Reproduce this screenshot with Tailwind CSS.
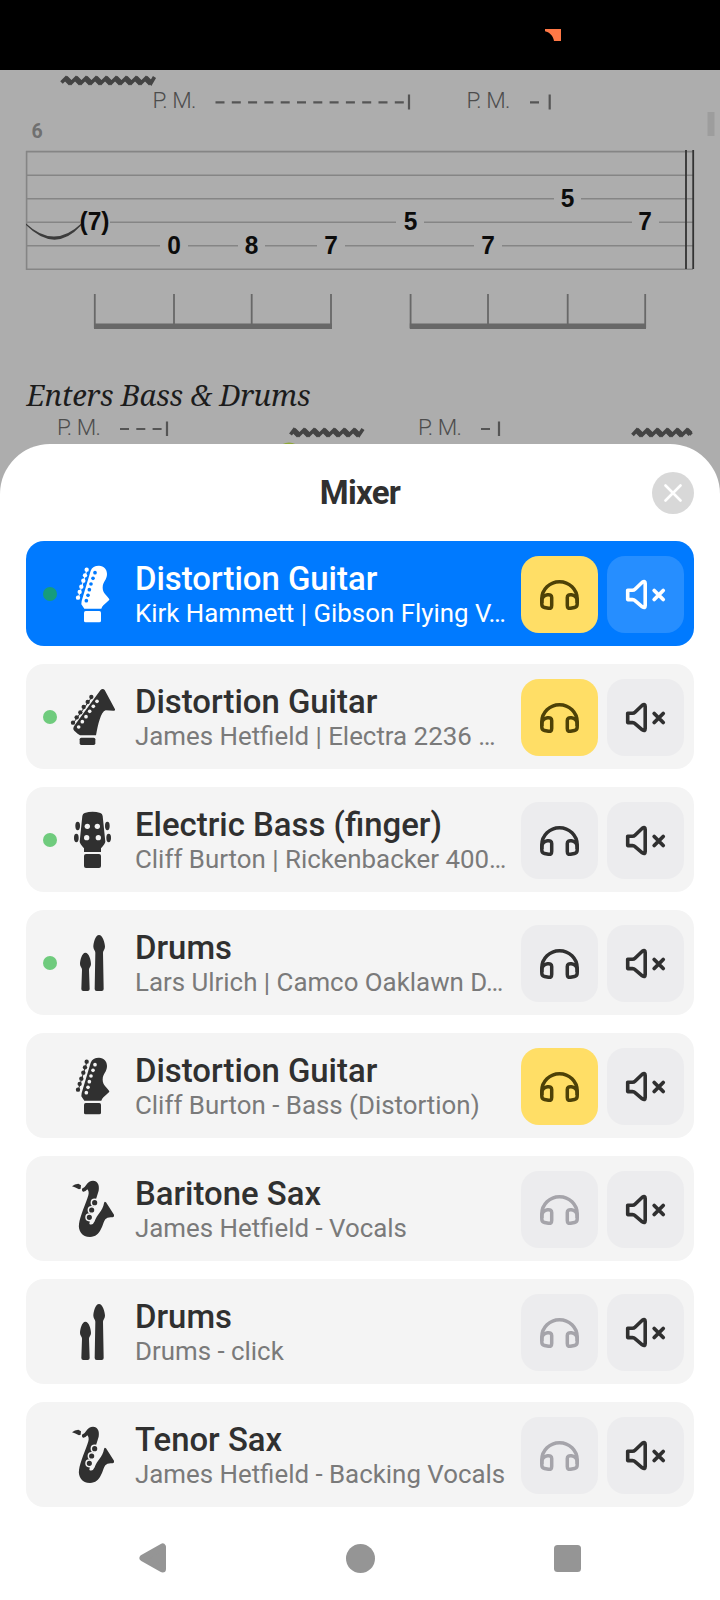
<!DOCTYPE html>
<html lang="en">
<head>
<meta charset="utf-8">
<title>Mixer</title>
<script src="https://cdn.jsdelivr.net/npm/@tailwindcss/browser@4"></script>
</head>
<body class="w-[720px] h-[1600px] overflow-hidden bg-[#adadad] font-[Roboto,sans-serif] text-[#303030]">
<svg class="hidden">
  <symbol id="guitar" viewBox="0 0 150 174">
    <path fill="currentColor" d="M93 2C108 2 117 13 117 27C117 45 104 50 104 68C104 85 118 92 124 103C125 108 104 118 100 131H49L40 118L41 108L68 17C72 7 80 2 93 2Z"/>
    <rect fill="currentColor" x="48" y="138" width="51" height="34" rx="5"/>
    <g fill="currentColor"><circle cx="56" cy="14" r="6.5"/><circle cx="51" cy="31" r="6.5"/><circle cx="46" cy="47" r="6.5"/><circle cx="40" cy="65" r="6.5"/><circle cx="35" cy="81" r="6.5"/><circle cx="30" cy="98" r="6.5"/></g>
    <path stroke="currentColor" stroke-width="3" d="M57 14L31 98"/>
    <g fill="var(--hole)"><circle cx="81" cy="23" r="5.5"/><circle cx="75" cy="40" r="5.5"/><circle cx="69" cy="57" r="5.5"/><circle cx="64" cy="74" r="5.5"/><circle cx="60" cy="91" r="5.5"/><circle cx="55" cy="107" r="5.5"/></g>
  </symbol>
  <symbol id="pointed" viewBox="0 0 150 174">
    <path fill="currentColor" d="M97 7Q104 -1 110 6L141 64Q142 69 136 68L113 67C98 72 90 110 84 142H36Q20 132 16 124Q15 118 20 112Z"/>
    <rect fill="currentColor" x="35" y="149" width="47" height="22" rx="5"/>
    <g fill="currentColor"><circle cx="70" cy="27" r="6.5"/><circle cx="59" cy="42" r="6.5"/><circle cx="47" cy="57" r="6.5"/><circle cx="37" cy="73" r="6.5"/><circle cx="26" cy="88" r="6.5"/><circle cx="15" cy="104" r="6.5"/></g>
    <path stroke="currentColor" stroke-width="3" d="M71 28L16 105"/>
    <g fill="var(--hole)"><circle cx="87" cy="40" r="5.5"/><circle cx="76" cy="55" r="5.5"/><circle cx="65" cy="70" r="5.5"/><circle cx="54" cy="86" r="5.5"/><circle cx="43" cy="101" r="5.5"/><circle cx="32" cy="117" r="5.5"/></g>
  </symbol>
  <symbol id="bass" viewBox="0 0 150 174">
    <path fill="currentColor" d="M50 6Q74 -1 97 6Q103 8 104 15L112 92Q111 98 99 112V123H48V112Q36 98 35 92L43 15Q44 8 50 6Z"/>
    <rect fill="currentColor" x="48" y="129" width="51" height="42" rx="6"/>
    <g fill="currentColor"><ellipse cx="29" cy="45" rx="7" ry="12.5"/><ellipse cx="118" cy="45" rx="7" ry="12.5"/><ellipse cx="25" cy="81" rx="7" ry="12.5"/><ellipse cx="122" cy="81" rx="7" ry="12.5"/></g>
    <g fill="var(--hole)"><circle cx="58" cy="46" r="8"/><circle cx="88" cy="46" r="8"/><circle cx="56" cy="80" r="8"/><circle cx="91" cy="80" r="8"/></g>
  </symbol>
  <symbol id="drums" viewBox="0 0 150 174">
    <path fill="currentColor" d="M93 3C104 3 111 28 111 38C111 46 105 50 105 56L107 165Q107 171 101 171H86Q80 171 80 165L82 56C82 50 76 46 76 38C76 28 82 3 93 3Z"/>
    <path fill="currentColor" d="M52 56C63 56 69 78 69 90C69 98 63 101 63 107L65 165Q65 171 59 171H46Q40 171 40 165L42 107C42 101 36 98 36 90C36 78 42 56 52 56Z"/>
  </symbol>
  <symbol id="sax" viewBox="0 0 150 174">
    <path fill="currentColor" d="M12 19Q20 11 31 11L39 16L38 26L33 28Q22 22 12 19Z"/>
    <path fill="currentColor" d="M42 26Q51 22 55 14Q63 2 75 2C89 2 95 15 92 32L84 58L68 110L64 132Q74 138 80 124C86 104 104 94 108 70Q109 62 114 67Q126 86 138 104Q140 110 134 112Q118 110 112 118C102 132 100 171 66 171C42 171 30 152 33 132C36 108 54 70 61 46Q64 34 58 28Q52 36 45 35Q41 33 42 26Z"/>
    <g fill="currentColor" stroke="var(--hole)" stroke-width="4.5"><circle cx="80" cy="68" r="10"/><circle cx="71" cy="90" r="10"/><circle cx="64" cy="112" r="10"/></g>
  </symbol>
  <symbol id="solo" viewBox="0 0 77 77">
    <g fill="none" stroke="currentColor" stroke-width="3.5" stroke-linejoin="round">
      <path d="M20.8 47V43A17.7 17.3 0 0 1 56.2 43V47"/>
      <path d="M20.8 48V45C20.8 41 23 39.5 26.5 38.8Q30.7 38.2 30.7 41.5V49.5Q30.7 52.8 27.5 52.3L23.5 51.5Q20.8 51 20.8 48Z"/>
      <path d="M56.2 48V45C56.2 41 54 39.5 50.5 38.8Q46.3 38.2 46.3 41.5V49.5Q46.3 52.8 49.5 52.3L53.5 51.5Q56.2 51 56.2 48Z"/>
    </g>
  </symbol>
  <symbol id="mute" viewBox="0 0 77 77">
    <g fill="none" stroke="currentColor" stroke-width="3.6" stroke-linejoin="round" stroke-linecap="round">
      <path d="M20.7 34.2H25.5Q27 34.2 28 33.2L35.3 26.2Q38.2 24.2 38.2 27.6V49.6Q38.2 52.8 35.3 50.8L28 44.6Q27 43.6 25.5 43.6H20.7Z"/>
      <path d="M47.2 34.5L56.2 43.5M56.2 34.5L47.2 43.5" stroke-width="3.8"/>
    </g>
  </symbol>
</svg>

<div class="h-[70px] bg-black">
  <svg class="block" width="720" height="70"><path fill="#ff7846" d="M545 29H561V41H554C553.5 36 549 32 545 31.3Z"/></svg>
</div>

<svg class="block" width="720" height="374" viewBox="0 70 720 374">
  <g fill="none" stroke="#444" stroke-width="3.6">
    <path d="M61.5 82.5L66 78L71 83L76 78L81 83L86 78L91 83L96 78L101 83L106 78L111 83L116 78L121 83L126 78L131 83L136 78L141 83L146 78L151 83L154.500 77"/>
    <path stroke-width="5.500" d="M65.500 78L71 83.500M75.500 78L81 83.500M85.500 78L91 83.500M95.500 78L101 83.500M105.500 78L111 83.500M115.500 78L121 83.500M125.500 78L131 83.500M135.500 78L141 83.500M145.500 78L151 83.500"/>
    <path d="M290.500 434.500L294 430L299 435L304 430L309 435L314 430L319 435L324 430L329 435L334 430L339 435L344 430L349 435L354 430L359 435L363 429"/>
    <path stroke-width="5.500" d="M293.500 430L299 435.500M303.500 430L309 435.500M313.500 430L319 435.500M323.500 430L329 435.500M333.500 430L339 435.500M343.500 430L349 435.500M353.500 430L359 435.500"/>
    <path d="M632.500 435L637 430L642 435L647 430L652 435L657 430L662 435L667 430L672 435L677 430L682 435L687 430L691.500 434.500"/>
    <path stroke-width="5.500" d="M636.500 430L642 435.500M646.500 430L652 435.500M656.500 430L662 435.500M666.500 430L672 435.500M676.500 430L682 435.500M686.500 430L690.500 434"/>
  </g>
  <g font-family="Roboto" font-weight="300" font-size="22.500" fill="#4c4c4c">
    <text x="152.500" y="107.700" textLength="44">P. M.</text><text x="466.500" y="107.700" textLength="44">P. M.</text>
    <text x="57" y="434.700" textLength="44">P. M.</text><text x="418" y="434.700" textLength="44">P. M.</text>
  </g>
  <g stroke="#555" stroke-width="2.200">
    <path stroke-dasharray="9 7.300" d="M215.500 102.300H404"/><path d="M409 94.500V109.500M530 102.300H539M549.700 94.500V109.500"/>
    <path stroke-dasharray="9 7.300" d="M120 429H162"/><path d="M167 421.500V436M481 429H490M499 421.500V436"/>
  </g>
  <text x="31.500" y="137.700" font-family="Roboto" font-weight="700" font-size="19.500" fill="#707070">6</text>
  <rect x="707.500" y="112" width="7" height="24" fill="#9d9d9d"/>
  <g fill="none" stroke="#858585" stroke-width="1.600">
    <path d="M26 151.600H693M26 175.200H693M26 198.700H554M581 198.700H693M26 222.300H80M110 222.300H396M424 222.300H632M659 222.300H693M26 245.700H160M188 245.700H238M265 245.700H317M345 245.700H474M502 245.700H693M26 269.200H693M26.600 151V270"/>
  </g>
  <path stroke="#333" stroke-width="1.800" d="M686 150V269M693.200 150V269"/>
  <path fill="#3c3c3c" d="M26 223.500Q54 249.500 81 223.800L81 225.500Q55 254 26 225Z"/>
  <g font-family="Liberation Sans" font-weight="700" font-size="26" fill="#0c0c0c">
    <text x="79.500" y="230" textLength="30" lengthAdjust="spacingAndGlyphs">(7)</text><text x="167.200" y="253.700" textLength="13.600" lengthAdjust="spacingAndGlyphs">0</text><text x="244.700" y="253.700" textLength="13.600" lengthAdjust="spacingAndGlyphs">8</text><text x="324.200" y="253.700" textLength="13.600" lengthAdjust="spacingAndGlyphs">7</text>
    <text x="403.700" y="230" textLength="13.600" lengthAdjust="spacingAndGlyphs">5</text><text x="481.200" y="253.700" textLength="13.600" lengthAdjust="spacingAndGlyphs">7</text><text x="560.700" y="206.700" textLength="13.600" lengthAdjust="spacingAndGlyphs">5</text><text x="638.200" y="230" textLength="13.600" lengthAdjust="spacingAndGlyphs">7</text>
  </g>
  <g fill="none" stroke="#686868"><path stroke-width="1.800" d="M94.800 294V328M174 294V326M251.700 294V326M331 294V328M410.600 294V328M488 294V326M567.700 294V326M645.200 294V328"/>
  <path stroke-width="5.600" d="M94 326.200H332M409.800 326.200H646"/></g>
  <text x="26.500" y="405.500" font-family="'Noto Serif','Liberation Serif',serif" font-style="italic" font-size="29.300" fill="#1c1c1c" textLength="284">Enters Bass &amp; Drums</text>
  <circle cx="289" cy="455.500" r="13" fill="#8fa83a"/>
</svg>

<main class="flex h-[1156px] flex-col rounded-t-[50px] bg-white">
  <header class="grid h-[97px] grid-cols-[1fr_auto_1fr] items-center px-[26px]">
    <h1 class="col-start-2 text-[33px] leading-[38px] font-bold tracking-[-0.7px]">Mixer</h1>
    <button class="flex size-[42px] items-center justify-center justify-self-end rounded-full bg-[#d8d8d8]" aria-label="Close">
      <svg width="18" height="18"><path d="M1.5 1.5L16.5 16.5M16.5 1.5L1.5 16.5" stroke="#fff" stroke-width="2.6" stroke-linecap="round"/></svg>
    </button>
  </header>
  <section id="tracks" class="flex flex-col gap-[18px] px-[26px]"></section>
  <nav class="flex h-[93px] items-center justify-between pt-[9px] pr-[139px] pl-[139px]">
    <svg width="28" height="30"><path fill="#959595" stroke="#959595" stroke-width="7" stroke-linejoin="round" d="M4 15L23.5 4V26Z"/></svg>
    <div class="size-[29px] rounded-full bg-[#959595]"></div>
    <div class="size-[27px] rounded-[3.5px] bg-[#959595]"></div>
  </nav>
</main>
<script>
const tracks = [
  ["guitar", "Distortion Guitar", "Kirk Hammett | Gibson Flying V…", "on", 1, 1],
  ["pointed", "Distortion Guitar", "James Hetfield | Electra 2236 …", "on", 1],
  ["bass", "Electric Bass (finger)", "Cliff Burton | Rickenbacker 400…", "off", 1],
  ["drums", "Drums", "Lars Ulrich | Camco Oaklawn D…", "off", 1],
  ["guitar", "Distortion Guitar", "Cliff Burton - Bass (Distortion)", "on", 0],
  ["sax", "Baritone Sax", "James Hetfield - Vocals", "dim", 0],
  ["drums", "Drums", "Drums - click", "dim", 0],
  ["sax", "Tenor Sax", "James Hetfield - Backing Vocals", "dim", 0],
];
const solo = { on: "bg-[#ffde66] text-[#4d4107]", off: "bg-[#ececee] text-[#303030]", dim: "bg-[#ececee] text-[#a5a4aa]" };
document.getElementById("tracks").innerHTML = tracks.map(([icon, name, sub, s, dot, sel]) => `
  <article class="flex h-[105px] items-center rounded-[18px] pr-[10px] pl-[17px] ${sel ? "bg-[#007aff] text-white [--hole:#007aff]" : "bg-[#f4f4f4] [--hole:#f4f4f4]"}">
    <span class="mt-px size-[14px] rounded-full ${dot ? (sel ? "bg-[#169c7c]" : "bg-[#6fcb7d]") : ""}"></span>
    <svg class="ml-[11px] mt-px h-[58px] w-[50px]"><use href="#${icon}"/></svg>
    <div class="ml-[17px] min-w-0 flex-1 whitespace-nowrap pt-[2px]">
      <div class="text-[32.9px] leading-[38px] font-medium">${name}</div>
      <div class="text-[25.87px] leading-[31px] ${sel ? "" : "text-[#7a7a7a]"}">${sub}</div>
    </div>
    <div class="flex gap-[9px] pt-[2px]">
      <button class="size-[77px] rounded-[18px] ${solo[s]}"><svg class="size-[77px]"><use href="#solo"/></svg></button>
      <button class="size-[77px] rounded-[18px] ${sel ? "bg-[#268eff]" : "bg-[#ececee]"}"><svg class="size-[77px]"><use href="#mute"/></svg></button>
    </div>
  </article>`).join("");
</script>
</body>
</html>
